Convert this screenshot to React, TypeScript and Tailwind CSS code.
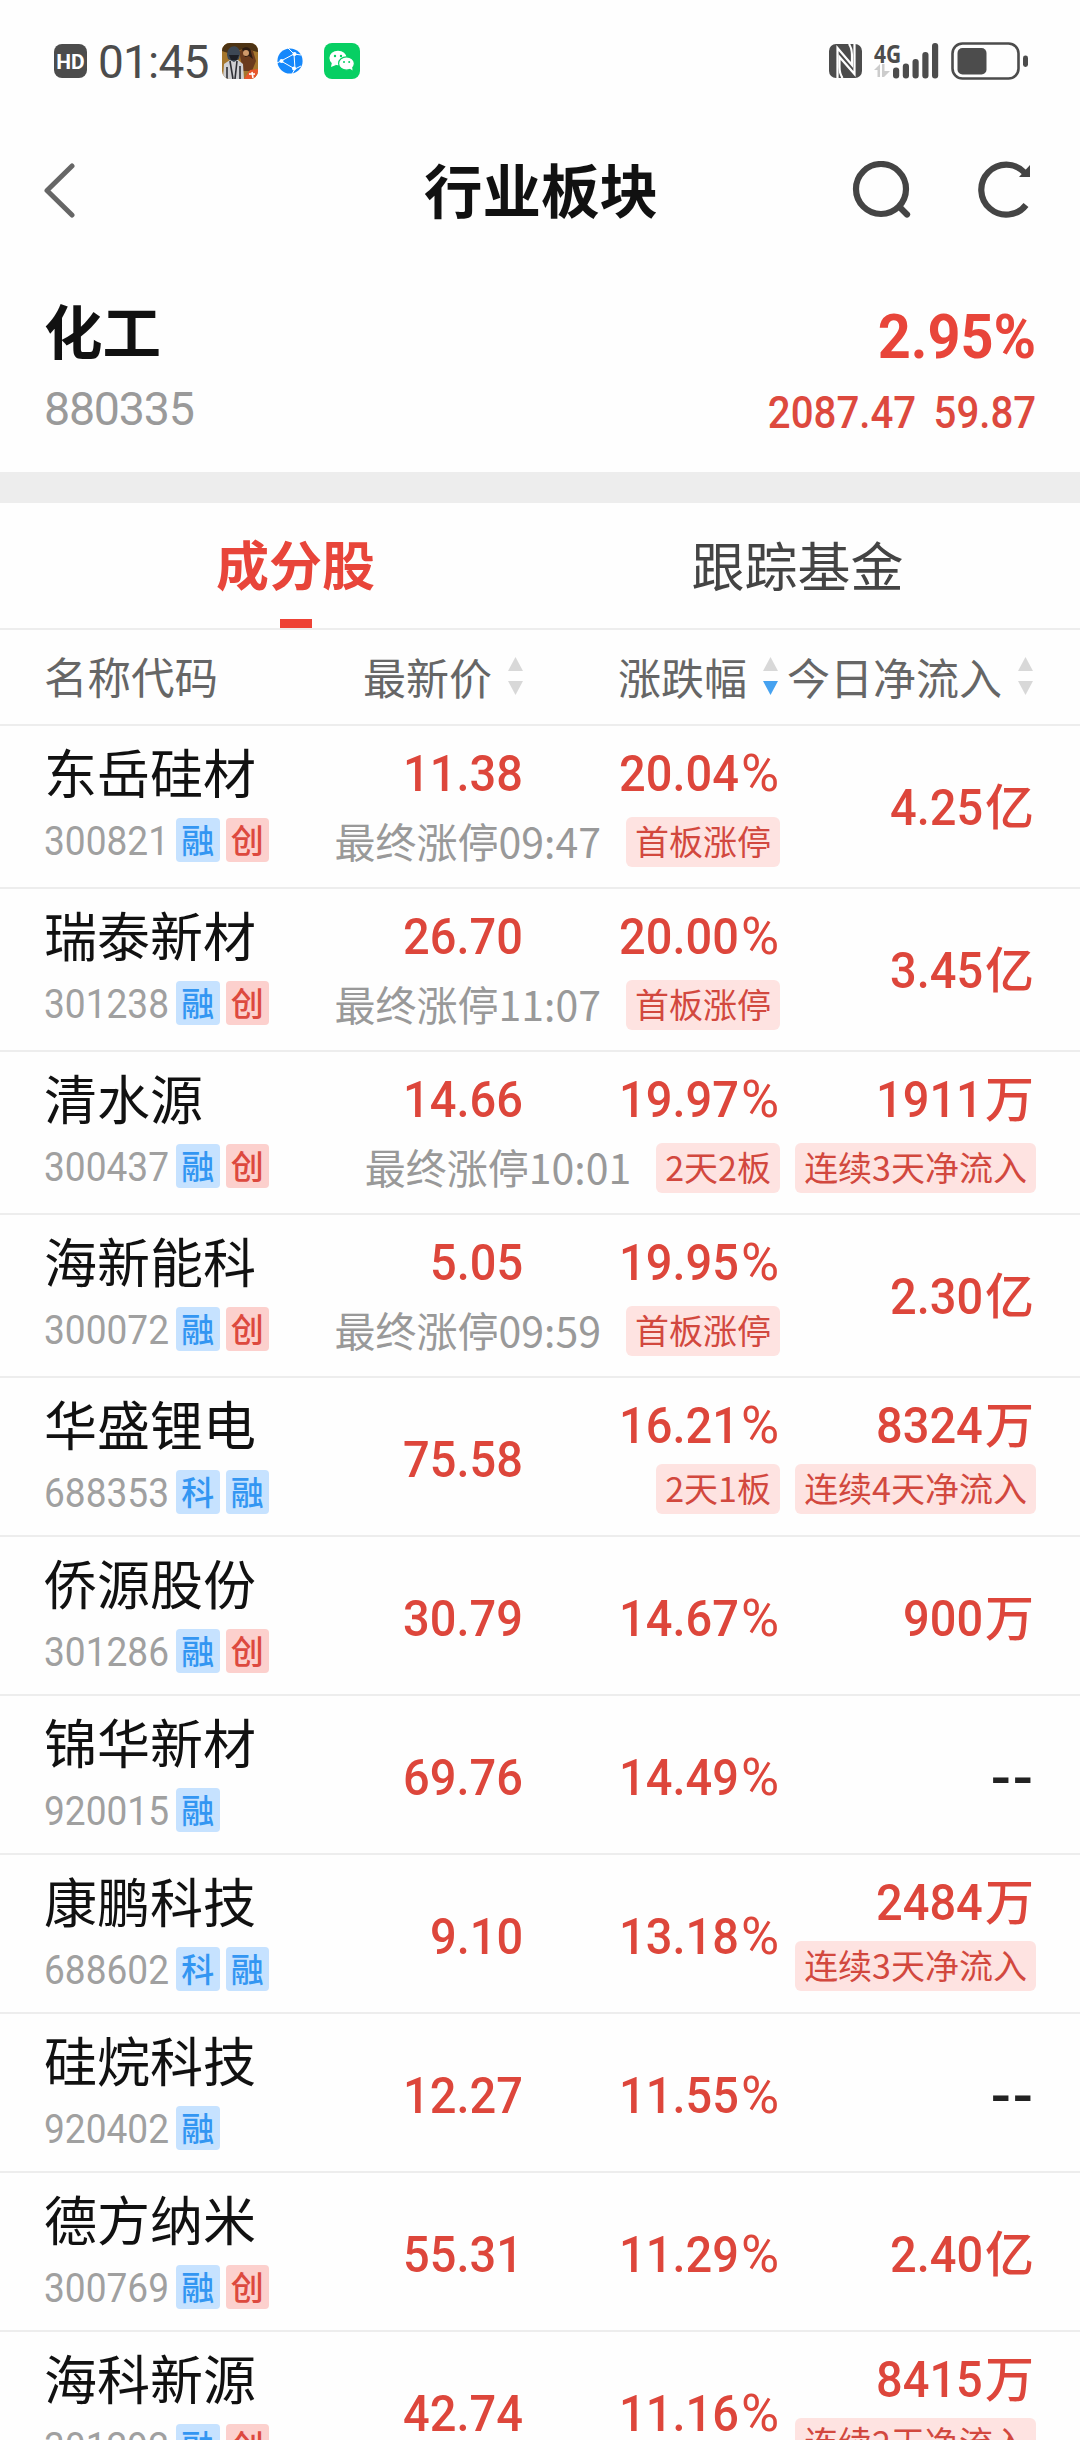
type Mark = "融" | "创" | "科"

type Stock = {
  name: string
  code: string
  marks: Mark[]
  price: string
  change: string
  flow: string
  unit?: string
  limitTime?: string
  changeTag?: string
  flowTag?: string
}

const STOCKS: Stock[] = [
  { name: "东岳硅材", code: "300821", marks: ["融", "创"], price: "11.38", change: "20.04", flow: "4.25", unit: "亿", limitTime: "最终涨停09:47", changeTag: "首板涨停" },
  { name: "瑞泰新材", code: "301238", marks: ["融", "创"], price: "26.70", change: "20.00", flow: "3.45", unit: "亿", limitTime: "最终涨停11:07", changeTag: "首板涨停" },
  { name: "清水源", code: "300437", marks: ["融", "创"], price: "14.66", change: "19.97", flow: "1911", unit: "万", limitTime: "最终涨停10:01", changeTag: "2天2板", flowTag: "连续3天净流入" },
  { name: "海新能科", code: "300072", marks: ["融", "创"], price: "5.05", change: "19.95", flow: "2.30", unit: "亿", limitTime: "最终涨停09:59", changeTag: "首板涨停" },
  { name: "华盛锂电", code: "688353", marks: ["科", "融"], price: "75.58", change: "16.21", flow: "8324", unit: "万", changeTag: "2天1板", flowTag: "连续4天净流入" },
  { name: "侨源股份", code: "301286", marks: ["融", "创"], price: "30.79", change: "14.67", flow: "900", unit: "万" },
  { name: "锦华新材", code: "920015", marks: ["融"], price: "69.76", change: "14.49", flow: "--" },
  { name: "康鹏科技", code: "688602", marks: ["科", "融"], price: "9.10", change: "13.18", flow: "2484", unit: "万", flowTag: "连续3天净流入" },
  { name: "硅烷科技", code: "920402", marks: ["融"], price: "12.27", change: "11.55", flow: "--" },
  { name: "德方纳米", code: "300769", marks: ["融", "创"], price: "55.31", change: "11.29", flow: "2.40", unit: "亿" },
  { name: "海科新源", code: "301292", marks: ["融", "创"], price: "42.74", change: "11.16", flow: "8415", unit: "万", flowTag: "连续2天净流入" },
]

function StatusBar() {
  return (
    <div className="flex h-[122px] shrink-0 items-center pr-[52px] pl-[54px]">
      <div className="flex h-[34px] w-[33px] items-center justify-center rounded-[8px] bg-[#4c4c4c] pt-[2px] font-['Roboto',sans-serif] text-[21px] leading-none font-bold text-white">
        HD
      </div>
      <span className="ml-[11px] w-[112px] pt-[2px] whitespace-nowrap font-['Roboto',sans-serif] text-[46px] leading-none tracking-[-0.8px] text-[#4c4c4c]">
        01:45
      </span>
      <svg className="ml-[12px]" width="36" height="36" viewBox="0 0 36 36">
        <defs>
          <clipPath id="game">
            <rect width="36" height="36" rx="8" />
          </clipPath>
        </defs>
        <g clipPath="url(#game)">
          <rect width="36" height="36" fill="#a5762c" />
          <path d="M0 0h36v9l-14-3L6 10 0 8z" fill="#4d3314" />
          <path d="M17 8l8-3 6 3 3 10-4 10h-9z" fill="#6b3b1d" />
          <path d="M20 6c3-3 9-2 9 3l2 7-4-3-4 1z" fill="#2b1b12" />
          <circle cx="24" cy="10" r="3" fill="#d09a6a" />
          <path d="M1 36l1-15 6-4 8 0 5 4 1 15z" fill="#cfcfd2" />
          <path d="M8 18l3 18M15 18l-2 18M5 24v12M18 23v13" stroke="#2e2f35" strokeWidth="1.6" />
          <path d="M5 12c0-11 13-12 13-1l-1 5-5 3-6-3z" fill="#3d4854" />
          <path d="M7 12h10l-2 5h-6z" fill="#1d1f24" />
          <path d="M22 36l6-9 8-1v10z" fill="#e8562c" />
          <path d="M27 31h6M30 29l1 6" stroke="#fff" strokeWidth="1.6" />
        </g>
      </svg>
      <svg className="ml-[19px]" width="26" height="26" viewBox="0 0 26 26">
        <circle cx="13" cy="13" r="12.6" fill="#1688fb" />
        <path d="M4 13L17 6l1 15zM17 6L11 0M17 6l7 1M18 21l-3 5M18 21l6-3M4 13l-4 2" stroke="#fff" strokeWidth="1" fill="none" />
        <circle cx="17.500" cy="6" r="2" fill="#fff" />
        <circle cx="4.500" cy="13" r="2" fill="#fff" />
        <circle cx="17" cy="20.500" r="2" fill="#fff" />
      </svg>
      <svg className="ml-[21px]" width="36" height="36" viewBox="0 0 36 36">
        <rect width="36" height="36" rx="8" fill="#07cf63" />
        <ellipse cx="14" cy="15" rx="8.600" ry="7.300" fill="#fff" />
        <path d="M8 19l-1 5 5-2z" fill="#fff" />
        <ellipse cx="22.500" cy="20.500" rx="7.900" ry="6.700" fill="#fff" stroke="#07cf63" strokeWidth="1.200" />
        <path d="M25 25l3.500 2.500-.5-5z" fill="#fff" />
        <circle cx="11" cy="13" r="1.200" fill="#07cf63" />
        <circle cx="17" cy="13" r="1.200" fill="#07cf63" />
        <circle cx="20" cy="19" r="1" fill="#07cf63" />
        <circle cx="25.200" cy="19" r="1" fill="#07cf63" />
      </svg>

      {/* NFC */}
      <svg className="ml-auto" width="33" height="34" viewBox="0 0 33 34">
        <rect width="33" height="34" rx="7" fill="#4c4c4c" />
        <path d="M8.500 34V4L23 21V11c0-5-1-8-3-11" fill="none" stroke="#fff" strokeWidth="2.200" />
        <path d="M25.500 0v30L10.500 13v10c0 5 1 8 3 11" fill="none" stroke="#fff" strokeWidth="2.200" />
      </svg>
      <div className="ml-[12px] flex h-[38px] w-[27px] flex-col">
        <span className="w-[32px] origin-left scale-x-[0.84] font-['Open_Sans',sans-serif] text-[25px] leading-[22px] font-bold text-[#4c4c4c]">4G</span>
        <svg width="16" height="13" viewBox="0 0 16 13">
          <path d="M0 6l6-6v13H3.500V6zM8 0h2.500v7H16l-6 6H8z" fill="#cccccc" />
        </svg>
      </div>
      <svg className="-ml-[8px]" width="46" height="36" viewBox="0 0 46 36" fill="#4c4c4c">
        <rect x="0" y="24.500" width="6.200" height="11" rx="3" />
        <rect x="9.800" y="20.500" width="6.200" height="15" rx="3" />
        <rect x="19.500" y="16" width="6.200" height="19.500" rx="3" />
        <rect x="29.300" y="9" width="6.200" height="26.500" rx="3" />
        <rect x="39" y="0" width="6.200" height="35.500" rx="3" />
      </svg>
      <svg className="ml-[12px]" width="77" height="38" viewBox="0 0 77 38">
        <rect x="1.500" y="1.500" width="66" height="35" rx="10" fill="none" stroke="#4c4c4c" strokeWidth="2.600" />
        <rect x="6.500" y="6" width="29" height="26.500" rx="5" fill="#4c4c4c" />
        <rect x="72" y="13.500" width="5" height="11.500" rx="2.400" fill="#4c4c4c" />
      </svg>
    </div>
  )
}

function NavBar() {
  return (
    <div className="grid h-[138px] shrink-0 grid-cols-[1fr_auto_1fr] items-center pr-[47px] pl-[49px]">
      <svg className="-ml-[5px]" width="34" height="58" viewBox="0 0 34 58" fill="none" stroke="#666666" strokeWidth="5" strokeLinecap="round" strokeLinejoin="round">
        <path d="M28 4L3 28.500 28 53" />
      </svg>
      <h1 className="pb-[5px] text-[58.500px] leading-none font-bold text-[#111111]">行业板块</h1>
      <div className="flex items-center justify-end gap-[66px]">
        <svg width="60" height="60" viewBox="0 0 60 60" fill="none" stroke="#444444" strokeWidth="6.200">
          <circle cx="30" cy="28" r="25" />
          <path d="M50 47.500l6 6" strokeLinecap="round" />
        </svg>
        <svg width="56" height="60" viewBox="0 0 56 60" fill="none" stroke="#444444" strokeWidth="6.200">
          <path d="M49 44A25 25 0 1 1 47.500 11.500" />
          <path d="M53 4v12H42z" fill="#444444" stroke="none" />
        </svg>
      </div>
    </div>
  )
}

function Summary() {
  return (
    <div className="flex h-[212px] shrink-0 justify-between px-[44px] pt-[36px]">
      <div>
        <div className="h-[72px] text-[58.500px] leading-[66px] font-bold text-[#111111]">化工</div>
        <div className="h-[80px] font-['Roboto',sans-serif] text-[46.500px] leading-[83px] tracking-[-1.200px] text-[#9a9a9a]">880335</div>
      </div>
      <div className="text-right font-['Roboto',sans-serif] whitespace-nowrap">
        <div className="h-[72px] origin-right scale-x-[0.93] text-[62px] leading-[81px] font-bold text-[#e8453a]">2.95%</div>
        <div className="h-[80px] origin-right scale-x-[0.925] text-[43.500px] leading-[92px] font-medium [word-spacing:8px] text-[#dd493e]">2087.47 59.87</div>
      </div>
    </div>
  )
}

function Tabs() {
  return (
    <div className="flex h-[127px] shrink-0 border-b-2 border-[#ededed] text-[53px] leading-none">
      <div className="flex w-[591px] flex-col items-center justify-between pt-[34px] font-bold text-[#e8453a]">
        成分股
        <div className="h-[9px] w-[32px] bg-[#ee4236]" />
      </div>
      <div className="flex w-[413px] justify-center pt-[35px] text-[#444444]">跟踪基金</div>
    </div>
  )
}

function SortArrows({ down = false }: { down?: boolean }) {
  return (
    <svg className="mr-[3px] ml-[16px]" width="15" height="38" viewBox="0 0 15 38">
      <path d="M0 14L7.500 0 15 14z" fill="#d8d8d8" />
      <path d="M0 24L7.500 38 15 24z" fill={down ? "#46a2f0" : "#d8d8d8"} />
    </svg>
  )
}

function TableHead() {
  return (
    <div className="flex h-[96px] shrink-0 items-center border-b-2 border-[#ededed] pb-[2px] pl-[44px] text-[43px] leading-none whitespace-nowrap text-[#666666]">
      <div className="w-[226px] text-[43.500px]">名称代码</div>
      <div className="flex w-[256px] items-center justify-end">
        最新价
        <SortArrows />
      </div>
      <div className="flex w-[255px] items-center justify-end">
        涨跌幅
        <SortArrows down />
      </div>
      <div className="flex w-[255px] items-center justify-end">
        今日净流入
        <SortArrows />
      </div>
    </div>
  )
}

function MarkBadge({ mark }: { mark: Mark }) {
  return (
    <span
      className={`flex h-[44px] w-[43.500px] items-center justify-center rounded-[4px] pb-[1px] text-[33px] leading-none font-medium ${
        mark === "创" ? "bg-[#fcd0cd] text-[#dd493e]" : "bg-[#c6e2ff] text-[#3396f2]"
      }`}
    >
      {mark}
    </span>
  )
}

function Tag({ children }: { children: string }) {
  return (
    <span className="flex h-[50px] shrink-0 items-center rounded-[6px] bg-[#fee3e1] px-[9px] pb-[2px] text-[34px] leading-none whitespace-nowrap text-[#d2483e]">
      {children}
    </span>
  )
}

function Digits({ children }: { children: string }) {
  return <span className="inline-block origin-right scale-x-[0.93]">{children}</span>
}

const NUM = "font-['Roboto','Noto_Sans_CJK_SC',sans-serif] text-[50.500px] leading-[70px] h-[70px] font-medium whitespace-nowrap"

function StockRow({ stock }: { stock: Stock }) {
  const tall = !!stock.limitTime
  const subHeight = tall ? "h-[65px]" : "h-[55px]"
  const column = (top: boolean) =>
    `flex shrink-0 flex-col items-end ${top ? "pt-[13px]" : tall ? "justify-center pt-[3px]" : "justify-center pt-[6px]"}`

  return (
    <div className={`flex shrink-0 border-b-2 border-[#ededed] pl-[44px] ${tall ? "h-[163px]" : "h-[159px]"}`}>
      <div className="w-[226px] shrink-0 pt-[10px]">
        <div className="h-[72px] text-[53px] leading-[70px] whitespace-nowrap text-[#111111]">{stock.name}</div>
        <div className="flex h-[64px] items-center gap-[6px]">
          <span className="w-[126px] origin-left scale-x-[0.915] pt-[2px] font-['Roboto',sans-serif] text-[40.500px] leading-none text-[#a0a0a0]">
            {stock.code}
          </span>
          {stock.marks.map((m) => (
            <MarkBadge key={m} mark={m} />
          ))}
        </div>
      </div>
      <div className={`w-[253px] text-[#dd463b] ${column(tall)}`}>
        <div className={NUM}>
          <Digits>{stock.price}</Digits>
        </div>
      </div>
      <div className={`w-[257px] text-[#dd463b] ${column(!!stock.changeTag)}`}>
        <div className={`pr-[1px] ${NUM}`}>
          <Digits>{stock.change}</Digits>
          <span className="ml-[2px] text-[52px] font-normal">%</span>
        </div>
        {stock.changeTag && (
          <div className={`flex items-center justify-end gap-[25px] ${subHeight}`}>
            {stock.limitTime && (
              <span className="pb-[3px] text-[41px] leading-none whitespace-nowrap text-[#999999]">{stock.limitTime}</span>
            )}
            <Tag>{stock.changeTag}</Tag>
          </div>
        )}
      </div>
      <div className={`w-[256px] ${stock.unit ? "text-[#dd463b]" : "text-[#222222]"} ${column(!!stock.flowTag)}`}>
        <div className={`pr-[2px] ${NUM}`}>
          {stock.unit ? (
            <>
              <Digits>{stock.flow}</Digits>
              <span className="ml-[2px] text-[49px]">{stock.unit}</span>
            </>
          ) : (
            <span className="inline-block origin-right scale-x-[1.1] pt-[1px] font-bold">{stock.flow}</span>
          )}
        </div>
        {stock.flowTag && (
          <div className={`flex items-center ${subHeight}`}>
            <Tag>{stock.flowTag}</Tag>
          </div>
        )}
      </div>
    </div>
  )
}

export default function App() {
  return (
    <div className="flex h-[2440px] w-[1080px] flex-col overflow-hidden bg-[#fefefe] font-['Noto_Sans_CJK_SC',sans-serif]">
      <StatusBar />
      <NavBar />
      <Summary />
      <div className="h-[31px] shrink-0 bg-[#ededed]" />
      <Tabs />
      <TableHead />
      {STOCKS.map((s) => (
        <StockRow key={s.code} stock={s} />
      ))}
    </div>
  )
}
